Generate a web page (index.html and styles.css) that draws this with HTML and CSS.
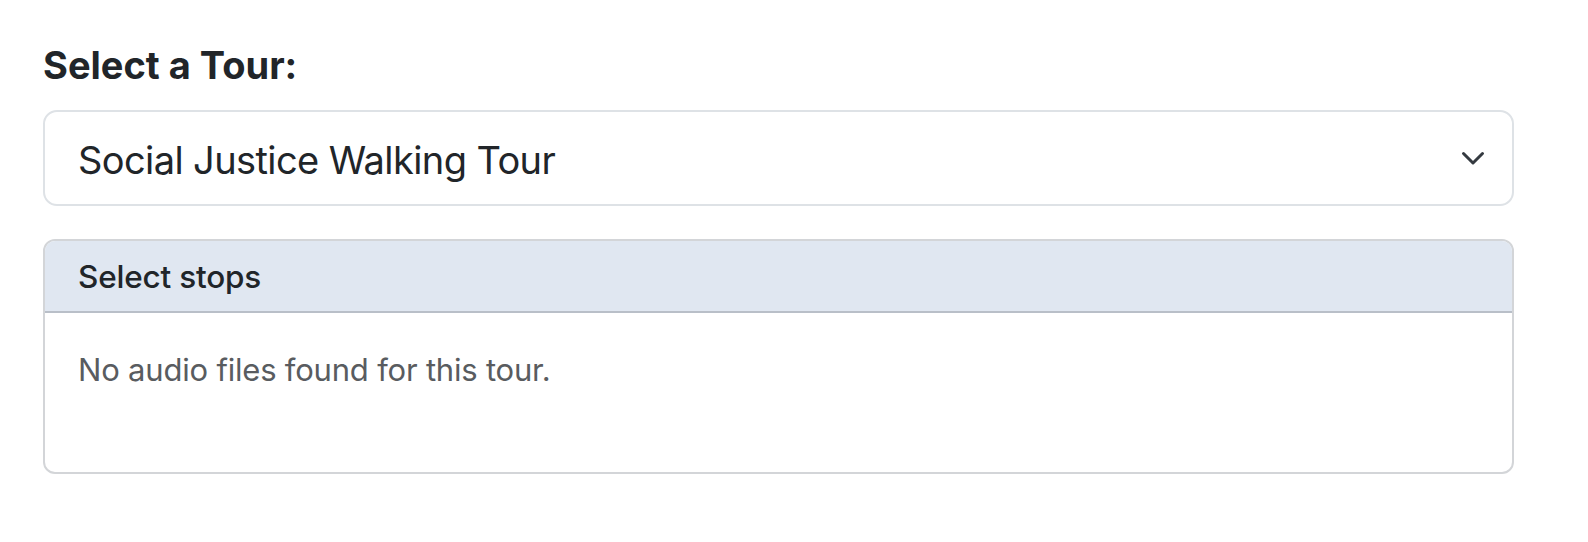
FILE: index.html
```html
<!DOCTYPE html>
<html lang="en">
<head>
<meta charset="utf-8">
<title>Select a Tour</title>
<link rel="stylesheet" href="styles.css">
</head>
<body>
<main class="page">
  <h2 class="title">Select a Tour:</h2>
  <div class="select">
    <span class="select-value">Social Justice Walking Tour</span>
    <svg class="chevron" width="24" height="18" viewBox="0 0 24 18" aria-hidden="true">
      <path d="M2.5 3.5 L12 13 L21.5 3.5" fill="none" stroke="#343a40" stroke-width="3" stroke-linecap="round" stroke-linejoin="round"/>
    </svg>
  </div>
  <section class="card">
    <div class="card-header">Select stops</div>
    <div class="card-body">
      <p class="empty">No audio files found for this tour.</p>
    </div>
  </section>
</main>
</body>
</html>
```
FILE: styles.css
```css
* { box-sizing: border-box; }
html, body {
  margin: 0;
  background: #ffffff;
}
body {
  font-family: Inter, "Noto Sans", "Liberation Sans", sans-serif;
  color: #212529;
}
.page {
  padding: 41px 74px 40px 43px;
}
.title {
  margin: 0 0 21px;
  font-size: 38px;
  line-height: 48px;
  font-weight: 700;
  letter-spacing: 0;
  color: #212529;
}
.select {
  height: 96px;
  border: 2px solid #dee2e6;
  border-radius: 14px;
  padding: 0 27px 0 33px;
  display: flex;
  align-items: center;
  justify-content: space-between;
  background: #fff;
}
.select-value {
  font-size: 38px;
  line-height: 1;
  letter-spacing: -0.6px;
  color: #212529;
  margin-top: 3px;
}
.chevron {
  display: block;
  margin-top: 2px;
}
.card {
  margin-top: 33px;
  border: 2px solid #d3d5d8;
  border-radius: 12px;
  overflow: hidden;
}
.card-header {
  height: 72px;
  padding: 0 33px;
  display: flex;
  align-items: center;
  background: #e0e7f1;
  border-bottom: 2px solid #b9bfc8;
  font-size: 31.5px;
  font-weight: 500;
  letter-spacing: -0.2px;
  color: #212529;
}
.card-body {
  height: 159px;
  padding: 35px 33px 0;
}
.empty {
  margin: 0;
  font-size: 31px;
  line-height: 44px;
  letter-spacing: -0.2px;
  color: #595c60;
}
```
